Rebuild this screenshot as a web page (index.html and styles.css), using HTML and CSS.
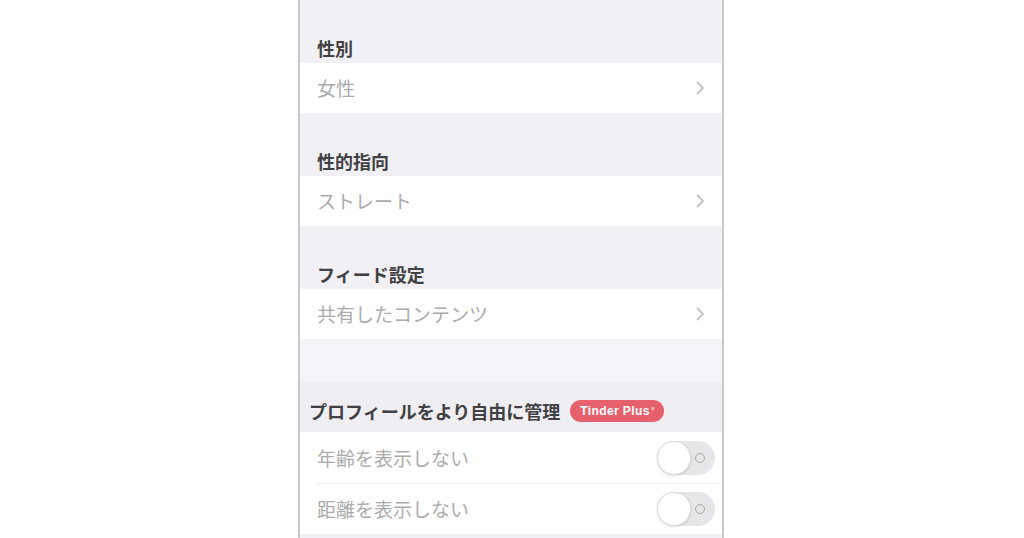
FILE: index.html
```html
<!DOCTYPE html>
<html lang="ja">
<head>
<meta charset="utf-8">
<link rel="stylesheet" href="styles.css">
</head>
<body>
<div class="phone">
  <div class="header">性別</div>
  <div class="row">
    <span class="value">女性</span>
    <svg class="chev" width="9" height="14" viewBox="0 0 9 14"><polyline points="1.5,1.5 7,7 1.5,12.5" fill="none" stroke="#c3c3c6" stroke-width="1.8" stroke-linecap="round" stroke-linejoin="round"/></svg>
  </div>
  <div class="header">性的指向</div>
  <div class="row">
    <span class="value">ストレート</span>
    <svg class="chev" width="9" height="14" viewBox="0 0 9 14"><polyline points="1.5,1.5 7,7 1.5,12.5" fill="none" stroke="#c3c3c6" stroke-width="1.8" stroke-linecap="round" stroke-linejoin="round"/></svg>
  </div>
  <div class="header">フィード設定</div>
  <div class="row">
    <span class="value">共有したコンテンツ</span>
    <svg class="chev" width="9" height="14" viewBox="0 0 9 14"><polyline points="1.5,1.5 7,7 1.5,12.5" fill="none" stroke="#c3c3c6" stroke-width="1.8" stroke-linecap="round" stroke-linejoin="round"/></svg>
  </div>
  <div class="spacer"></div>
  <div class="header plus-header">
    <span>プロフィールをより自由に管理</span>
    <span class="badge">Tinder Plus<span class="mark">♥</span></span>
  </div>
  <div class="group">
    <div class="row toggle-row">
      <span class="value">年齢を表示しない</span>
      <span class="toggle"><span class="knob"></span><span class="off"></span></span>
    </div>
    <div class="sep"></div>
    <div class="row toggle-row">
      <span class="value">距離を表示しない</span>
      <span class="toggle"><span class="knob"></span><span class="off"></span></span>
    </div>
  </div>
</div>
</body>
</html>
```
FILE: styles.css
```css
html, body {
  margin: 0;
  padding: 0;
  background: #ffffff;
  height: 538px;
  overflow: hidden;
}
body {
  font-family: "Noto Sans CJK JP", "Noto Sans", sans-serif;
}
.phone {
  margin-left: 298px;
  width: 422px;
  height: 538px;
  border-left: 2px solid #c8c8ca;
  border-right: 2px solid #c8c8ca;
  background: #f1f0f5;
  display: flex;
  flex-direction: column;
}
.header {
  height: 63px;
  box-sizing: border-box;
  display: flex;
  align-items: flex-end;
  padding: 0 0 3px 17px;
  font-size: 18px;
  font-weight: 700;
  color: #414143;
  line-height: 24px;
}
.spacer {
  height: 43px;
  background: #f4f3f7;
}
.plus-header {
  height: 50px;
  padding: 0 0 9px 9px;
  align-items: flex-end;
  gap: 10px;
  background: #efeef3;
}
.badge {
  display: inline-flex;
  align-items: center;
  height: 22px;
  margin-bottom: 1px;
  padding: 0 9px 0 10px;
  border-radius: 11px;
  background: #e7606e;
  color: #ffffff;
  font-family: "Liberation Sans", Arial, sans-serif;
  font-size: 12px;
  font-weight: 700;
  letter-spacing: 0.4px;
  line-height: 22px;
}
.badge .mark {
  font-size: 7px;
  line-height: 7px;
  margin-left: 1px;
  color: #f4b3ba;
  align-self: flex-start;
  margin-top: 5px;
}
.row {
  height: 50px;
  background: #ffffff;
  display: flex;
  align-items: center;
  justify-content: space-between;
  padding: 0 17px 0 17px;
  box-sizing: border-box;
}
.value {
  font-size: 19px;
  color: #ababad;
  line-height: 24px;
}
.chev {
  display: block;
}
.group {
  background: #ffffff;
}
.toggle-row {
  height: 51px;
  padding-right: 7px;
}
.toggle-row + .sep + .toggle-row {
  height: 50px;
}
.sep {
  height: 1px;
  background: #efeef2;
  margin-left: 16px;
}
.toggle {
  position: relative;
  width: 58px;
  height: 34px;
  border-radius: 17px;
  background: #e6e6e9;
  display: block;
}
.knob {
  position: absolute;
  left: 0;
  top: 0;
  width: 34px;
  height: 34px;
  box-sizing: border-box;
  border-radius: 50%;
  background: #ffffff;
  border: 1px solid #dcdcdf;
  box-shadow: 0 1px 3px rgba(0,0,0,0.12);
}
.off {
  position: absolute;
  right: 10px;
  top: 12px;
  width: 10px;
  height: 10px;
  box-sizing: border-box;
  border-radius: 50%;
  border: 1.5px solid #a9a9ad;
}
```
